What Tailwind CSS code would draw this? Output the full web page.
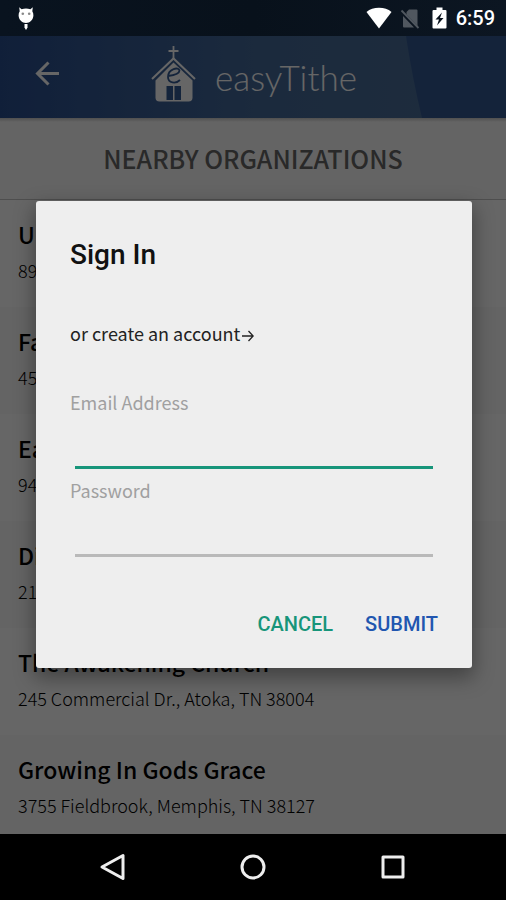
<!DOCTYPE html>
<html lang="en">
<head>
<meta charset="utf-8">
<meta name="viewport" content="width=device-width, initial-scale=1">
<title>easyTithe</title>
<script src="https://cdn.jsdelivr.net/npm/@tailwindcss/browser@4"></script>
</head>
<body class="flex h-screen flex-col overflow-hidden bg-black font-['Noto_Sans_CJK_SC',sans-serif]">

<div class="flex h-9 shrink-0 items-center justify-between bg-linear-to-r from-[#09131f] via-[#08111b] to-[#0c1622] pr-[11px] pl-[17px]">
  <svg class="h-6 w-[18px]" viewBox="0 0 18 24" fill="#fff" aria-label="Debugging">
    <path d="M2.200 1.200 4.600 3.200Q9 1.800 13.400 3.200L15.800 1.200 15.300 5.200Q16.500 7 16.400 9.500C16.200 13.600 13 17 9 17S1.800 13.600 1.600 9.500Q1.500 7 2.700 5.200Z"/>
    <path d="M7.500 18h3v3.500L9 24l-1.500-2.500Z"/>
    <circle cx="5.800" cy="7.800" r="1.300" fill="#888"/><circle cx="12.200" cy="7.800" r="1.300" fill="#888"/>
  </svg>
  <div class="flex items-center">
    <svg class="h-6 w-[26px]" viewBox="0 0 26 24" fill="#fff" aria-label="Wi-Fi"><path d="M13 22.500 .500 6Q5.500 1.800 13 1.800T25.500 6Z"/></svg>
    <svg class="ml-2 h-6 w-5" viewBox="0 0 20 24" aria-label="No SIM">
      <path d="M9 3.500h7.500q1 0 1 1V20L6.500 8.500V6ZM3 10 14 21.500H4q-1 0-1-1Z" fill="#50575f"/>
      <path d="M1.500 4.500 18.500 22" stroke="#50575f" stroke-width="1.800"/>
    </svg>
    <svg class="ml-3 h-6 w-[15px]" viewBox="0 0 15 24" aria-label="Charging">
      <path d="M4.500 1.500h6V4h3Q14.500 4 14.500 5V21.500q0 1-1 1h-12q-1 0-1-1V5q0-1 1-1h3Z" fill="#fff"/>
      <path d="M10 6.500 3.500 13.500H7L5 19.500 11.500 12H8Z" fill="#09121d"/>
    </svg>
    <span class="ml-[9px] font-[Roboto,sans-serif] text-xl font-medium text-white">6:59</span>
  </div>
</div>

<main class="relative flex min-h-0 flex-1 flex-col bg-white">
  <header class="relative z-0 flex h-[82px] shrink-0 items-center overflow-hidden bg-linear-to-r from-[#2a4f90] via-[#44699a] to-[#4d7099]">
    <svg class="absolute inset-0 -z-10 h-full w-full" viewBox="0 0 506 82" preserveAspectRatio="none" aria-hidden="true">
      <path d="M406 0Q412 40 422 82H506V0Z" fill="#345892"/>
    </svg>
    <button class="absolute top-6 left-[34px] size-7" aria-label="Back">
      <svg class="size-7" viewBox="0 0 28 28" fill="none" stroke="#fff" stroke-width="3"><path d="M25 13.500H4M14.500 2.500 3.500 13.500 14.500 24.500"/></svg>
    </button>
    <div class="mx-auto flex items-center gap-[18px] pb-1 pl-0.5">
      <svg class="h-[58px] w-[46px]" viewBox="0 0 46 58" aria-hidden="true">
        <path d="M22.500 0V14M17.500 5H27.500" stroke="#fff" stroke-width="1.800"/>
        <path d="M1 33 22.500 12.500 44 33" fill="none" stroke="#fff" stroke-width="2"/>
        <path d="M22.500 16.500 41.500 34.500V51.500q0 4-4 4H8.500q-4 0-4-4V34.500Z" fill="#fff"/>
        <path d="M15.500 40h6.500V54h-6.500ZM23.500 40H30V54h-6.500Z" fill="#335a94"/>
        <path d="M17 30Q28.500 28.500 28.500 24.500C28 20.500 17 22.500 17 31 17 37.500 25 38 29 34" fill="none" stroke="#335a94" stroke-width="1.800"/>
      </svg>
      <span class="pt-1 font-[Lato,sans-serif] text-[35px] leading-10 font-light text-white">easyTithe</span>
    </div>
  </header>

  <h1 class="flex h-[82px] shrink-0 items-center justify-center border-b border-[#c4c4c4] bg-linear-to-b from-[#c8c8c8] to-[#fafafa] to-[4px] text-[25px] font-medium text-[#666]">NEARBY ORGANIZATIONS</h1>

  <ul class="min-h-0 flex-1 overflow-hidden">
    <li class="h-[107px] bg-[#fefefe] px-[18px] pt-[18px]"><h2 class="text-[23px] leading-8 font-medium">U</h2><p class="mt-1 text-lg leading-8 font-light">89</p></li>
    <li class="h-[107px] bg-[#fafafa] px-[18px] pt-[18px]"><h2 class="text-[23px] leading-8 font-medium">Fa</h2><p class="mt-1 text-lg leading-8 font-light">45</p></li>
    <li class="h-[107px] bg-[#fefefe] px-[18px] pt-[18px]"><h2 class="text-[23px] leading-8 font-medium">Ea</h2><p class="mt-1 text-lg leading-8 font-light">94</p></li>
    <li class="h-[107px] bg-[#fafafa] px-[18px] pt-[18px]"><h2 class="text-[23px] leading-8 font-medium">Di</h2><p class="mt-1 text-lg leading-8 font-light">21</p></li>
    <li class="h-[107px] bg-[#fefefe] px-[18px] pt-[18px]"><h2 class="text-[23px] leading-8 font-medium">The Awakening Church</h2><p class="mt-1 text-lg leading-8 font-light">245 Commercial Dr., Atoka, TN 38004</p></li>
    <li class="h-[107px] bg-[#fafafa] px-[18px] pt-[18px]"><h2 class="text-[23px] leading-8 font-medium">Growing In Gods Grace</h2><p class="mt-1 text-lg leading-8 font-light">3755 Fieldbrook, Memphis, TN 38127</p></li>
  </ul>

  <div class="absolute inset-0 flex items-center bg-black/60 pr-[34px] pb-0.5 pl-9">
    <form role="dialog" aria-labelledby="title" class="w-full rounded-[3px] bg-[#eee] px-[34px] pt-9 pb-6 shadow-[0_8px_20px_2px_rgba(0,0,0,0.35)]">
      <h2 id="title" class="font-[Roboto,sans-serif] text-[28px] leading-9 font-medium text-[#111]">Sign In</h2>
      <a href="#" class="mt-11 block text-lg leading-8 text-[#222]">or create an account<svg class="ml-0.5 inline size-3" viewBox="0 0 12 12" fill="none" stroke="#222" stroke-width="1.300" aria-hidden="true"><path d="M0 6H11M6.500 1 11.200 6 6.500 11"/></svg></a>
      <label for="email" class="mt-[37px] block text-lg leading-8 text-[#a0a0a0]">Email Address</label>
      <input id="email" type="email" class="mx-[5px] block h-[51px] w-[calc(100%-10px)] border-b-3 border-[#17957a] bg-transparent text-lg outline-none">
      <label for="password" class="mt-[5px] block text-lg leading-8 text-[#a0a0a0]">Password</label>
      <input id="password" type="password" class="mx-[5px] block h-[51px] w-[calc(100%-10px)] border-b-3 border-[#b9b9b9] bg-transparent text-lg outline-none">
      <div class="mt-[47px] flex justify-end gap-8 font-[Roboto,sans-serif] text-xl leading-10 font-medium">
        <button type="button" class="text-[#17957a]">CANCEL</button>
        <button type="submit" class="text-[#2156b0]">SUBMIT</button>
      </div>
    </form>
  </div>
</main>

<nav class="flex h-[66px] shrink-0 items-center justify-center gap-[112px] bg-black">
  <button aria-label="Back"><svg class="size-7" viewBox="0 0 28 28" fill="none" stroke="#eee" stroke-width="3" stroke-linejoin="round"><path d="M24 2.500V25.500L3 14Z"/></svg></button>
  <button aria-label="Home"><svg class="size-7" viewBox="0 0 28 28" fill="none" stroke="#eee" stroke-width="3"><circle cx="14" cy="14" r="11"/></svg></button>
  <button aria-label="Recent apps"><svg class="size-7" viewBox="0 0 28 28" fill="none" stroke="#eee" stroke-width="3" stroke-linejoin="round"><path d="M4 4H24V24H4Z"/></svg></button>
</nav>
</body>
</html>
